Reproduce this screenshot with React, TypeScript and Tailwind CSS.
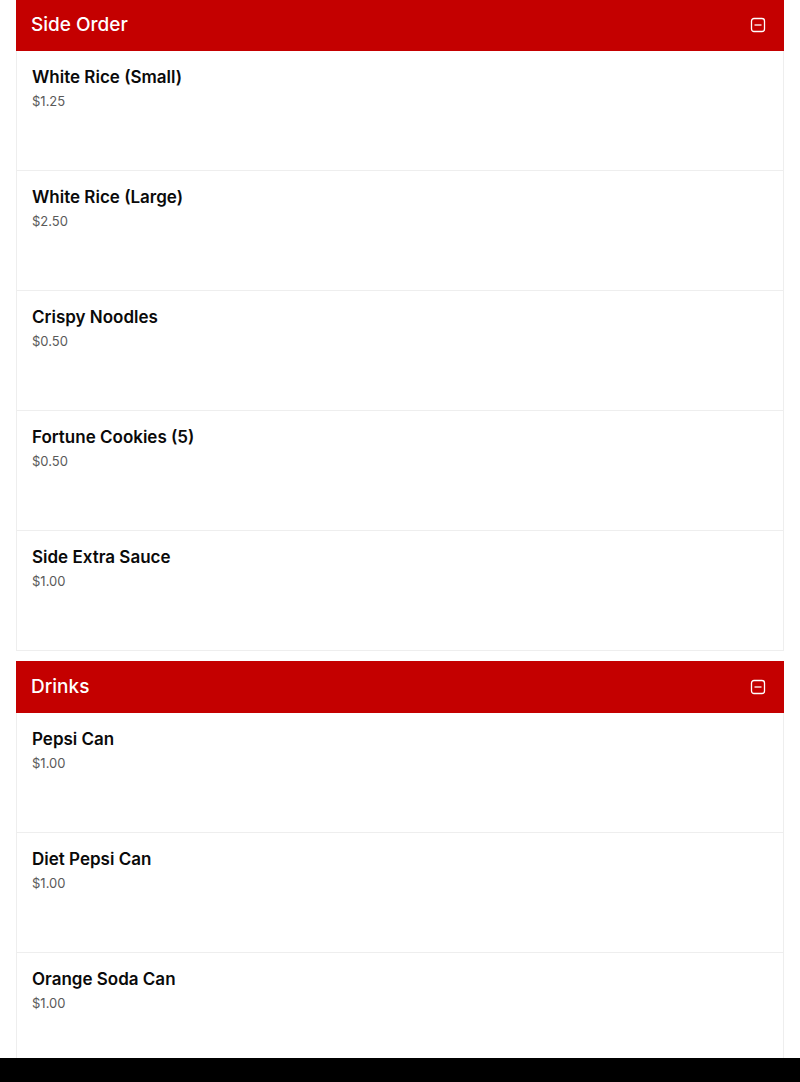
import React from "react";

type Item = { name: string; price: string };
type Section = { title: string; items: Item[] };

const sections: Section[] = [
  {
    title: "Side Order",
    items: [
      { name: "White Rice (Small)", price: "$1.25" },
      { name: "White Rice (Large)", price: "$2.50" },
      { name: "Crispy Noodles", price: "$0.50" },
      { name: "Fortune Cookies (5)", price: "$0.50" },
      { name: "Side Extra Sauce", price: "$1.00" },
    ],
  },
  {
    title: "Drinks",
    items: [
      { name: "Pepsi Can", price: "$1.00" },
      { name: "Diet Pepsi Can", price: "$1.00" },
      { name: "Orange Soda Can", price: "$1.00" },
    ],
  },
];

function MinusBox() {
  return (
    <svg width="16" height="16" viewBox="0 0 16 16" fill="none" stroke="white" strokeWidth="1.3">
      <rect x="1.5" y="1.5" width="13" height="13" rx="2.5" />
      <line x1="4.5" y1="8" x2="11.5" y2="8" />
    </svg>
  );
}

export default function App() {
  return (
    <div
      className="bg-white h-[1082px] overflow-hidden px-4"
      style={{ fontFamily: "Inter, 'Noto Sans', sans-serif" }}
    >
      <div className="flex flex-col gap-[10px] -mt-px">
        {sections.map((s) => (
          <div key={s.title} className="flex flex-col">
            <div className="h-[52px] bg-[#c40000] flex items-center justify-between pl-[15px] pr-[18px]">
              <span className="text-white text-[19px] font-medium">{s.title}</span>
              <MinusBox />
            </div>
            {s.items.map((it) => (
              <div
                key={it.name}
                className="h-[120px] border-x border-b border-[#eeeeee] px-[15px] pt-[15px]"
              >
                <div className="text-[17px] font-semibold text-[#0a0a0a] leading-[22px]">{it.name}</div>
                <div className="text-[13px] text-[#5a5a5a] mt-[3px] leading-[20px]">{it.price}</div>
              </div>
            ))}
          </div>
        ))}
      </div>
      <div className="fixed left-0 right-0 bottom-0 h-[24px] bg-black" />
    </div>
  );
}
